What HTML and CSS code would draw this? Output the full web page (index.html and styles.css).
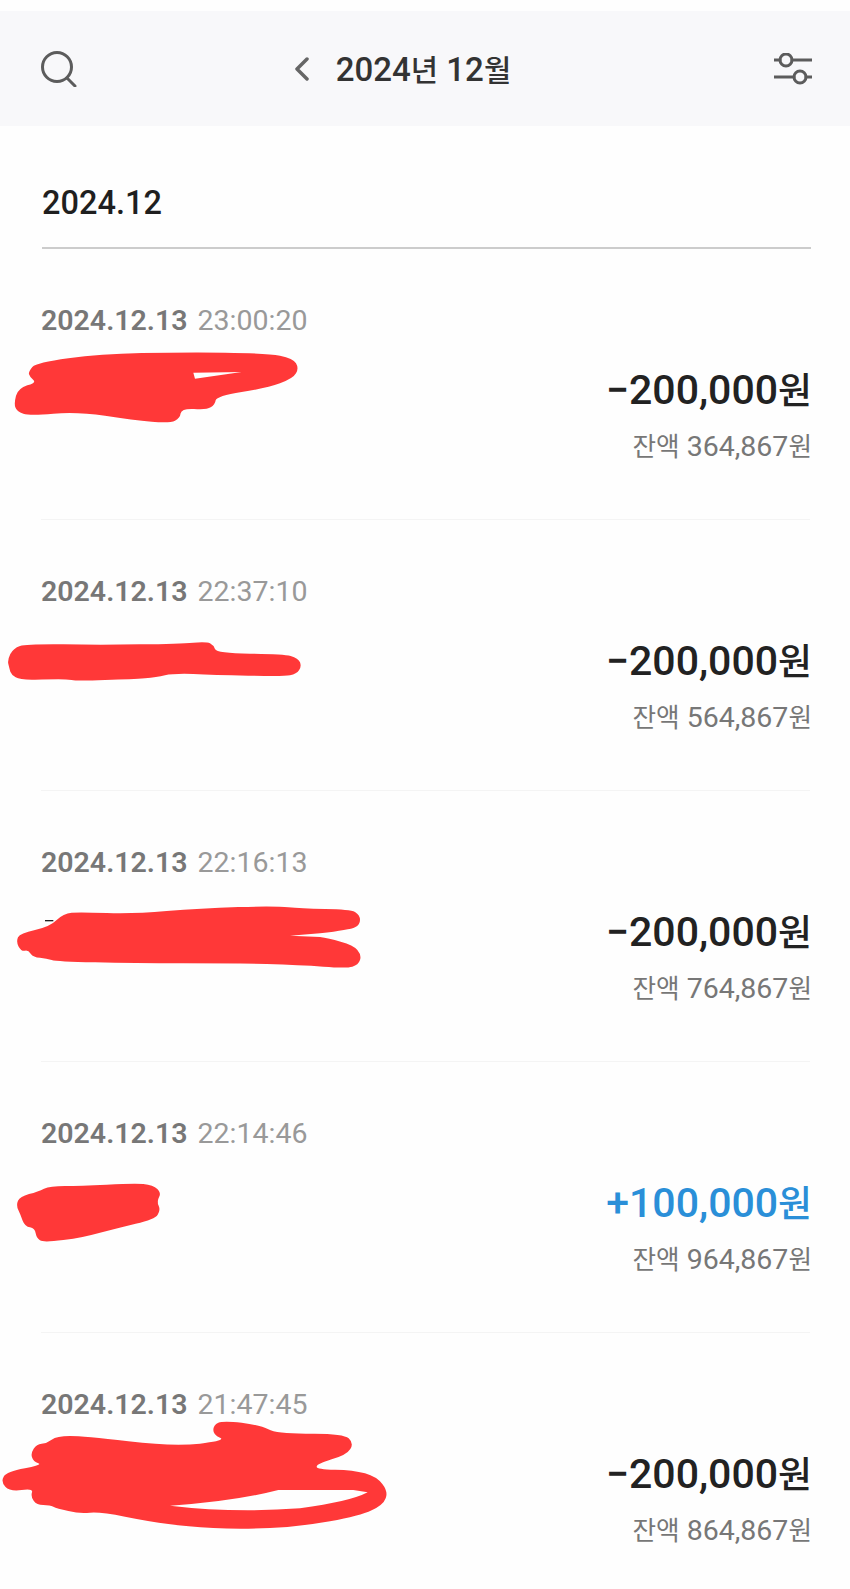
FILE: index.html
```html
<!DOCTYPE html>
<html lang="ko">

<head>
    <meta charset="UTF-8">
    <meta name="viewport" content="width=device-width, initial-scale=1.0">
    <title>2024년 12월</title>
    <link rel="stylesheet" href="styles.css">
</head>

<body>
    <header class="topbar">
        <svg class="icon" width="38" height="36" viewBox="0 0 38 36" fill="none">
            <circle cx="17" cy="16" r="14.5" />
            <path d="M27 27 L35 35" />
        </svg>
        <div class="month">
            <svg class="icon arrow" width="16" height="24" viewBox="0 0 16 24" fill="none">
                <path d="M13 2 L3 12 L13 22" />
            </svg>
            <span class="month-title">2024<span class="ko">년</span> 12<span class="ko">월</span></span>
            <!-- 다음 달 화살표: 이번 달이라 숨김 -->
            <svg class="icon arrow hidden" width="16" height="24" viewBox="0 0 16 24"></svg>
        </div>
        <svg class="icon" width="38" height="32" viewBox="0 0 38 32" fill="none">
            <circle cx="12" cy="7" r="6" />
            <path d="M0 7 H6 M18 7 H38" />
            <circle cx="26" cy="24" r="6" />
            <path d="M0 24 H20 M32 24 H38" />
        </svg>
    </header>

    <h2 class="section-title">2024.12</h2>

    <ul class="list">
        <li class="row">
            <p class="when"><b>2024.12.13</b> 23:00:20</p>
            <div class="money">
                <p class="amount">−200,000<span class="ko">원</span></p>
                <p class="balance"><span class="ko">잔액</span> 364,867<span class="ko">원</span></p>
            </div>
            <svg class="scribble s1" viewBox="0 180 1275 225">
                <path fill-rule="evenodd" d="M87 253 Q85 245 97 231 Q110 218 205 205 Q300 192 425 189 Q550 187 675 188 Q800 190 840 197 Q880 205 888 220 Q897 235 888 250 Q880 265 840 280 Q800 295 725 306 Q650 318 647 331 Q645 345 632 352 Q620 360 582 357 Q545 355 542 370 Q540 385 525 392 Q510 400 455 395 Q400 390 315 377 Q230 365 160 371 Q90 377 70 371 Q50 365 46 352 Q42 340 48 317 Q55 295 82 286 Q110 278 100 270 Q90 262 87 253 Z M580 248 L725 246 L585 266 Z" />
            </svg>
        </li>
        <li class="row">
            <p class="when"><b>2024.12.13</b> 22:37:10</p>
            <div class="money">
                <p class="amount">−200,000<span class="ko">원</span></p>
                <p class="balance"><span class="ko">잔액</span> 564,867<span class="ko">원</span></p>
            </div>
            <svg class="scribble s2" viewBox="0 60 1275 135">
                <path d="M25 132 Q22 120 31 102 Q40 85 60 78 Q80 72 190 73 Q300 75 420 73 Q540 72 580 68 Q620 65 630 70 Q640 75 645 87 Q650 100 750 101 Q850 102 872 108 Q895 115 900 127 Q905 140 897 151 Q890 162 870 166 Q850 170 745 167 Q640 165 580 162 Q520 160 495 166 Q470 172 435 175 Q400 178 315 180 Q230 183 215 180 Q200 178 175 178 Q150 178 105 179 Q60 180 47 172 Q35 165 31 155 Q28 145 25 132 Z" />
            </svg>
        </li>
        <li class="row">
            <p class="when"><b>2024.12.13</b> 22:16:13</p>
            <div class="money">
                <p class="amount">−200,000<span class="ko">원</span></p>
                <p class="balance"><span class="ko">잔액</span> 764,867<span class="ko">원</span></p>
            </div>
            <svg class="scribble s3" viewBox="0 840 1275 210">
                <path class="ink" d="M135 902 H160" />
                <path d="M56 980 Q48 965 54 952 Q60 940 105 930 Q150 920 170 900 Q190 880 215 878 Q240 876 320 879 Q400 882 500 873 Q600 865 715 861 Q830 858 865 862 Q900 866 975 867 Q1050 868 1065 876 Q1080 885 1080 900 Q1080 915 1065 922 Q1050 930 960 940 L870 947 L960 951 Q985 955 1022 965 Q1060 975 1072 990 Q1085 1005 1080 1020 Q1075 1035 1057 1040 Q1040 1045 970 1040 Q900 1035 800 1032 Q700 1030 550 1030 Q400 1030 285 1027 Q170 1025 155 1020 Q140 1015 120 1013 Q100 1012 92 1001 Q85 990 75 992 Q65 995 56 980 Z" />
            </svg>
        </li>
        <li class="row">
            <p class="when"><b>2024.12.13</b> 22:14:46</p>
            <div class="money">
                <p class="amount plus">+100,000<span class="ko">원</span></p>
                <p class="balance"><span class="ko">잔액</span> 964,867<span class="ko">원</span></p>
            </div>
            <svg class="scribble s4" viewBox="0 60 1275 195">
                <path d="M55 150 Q48 135 54 122 Q60 110 87 102 Q115 95 132 86 Q150 78 195 78 Q240 78 320 74 Q400 70 430 72 Q460 75 472 87 Q485 100 477 112 Q470 125 476 137 Q482 150 473 164 Q465 178 407 191 Q350 205 300 218 Q250 232 190 240 Q130 248 120 241 Q110 235 107 220 Q105 205 90 202 Q75 200 68 182 Q62 165 55 150 Z" />
            </svg>
        </li>
        <li class="row">
            <p class="when"><b>2024.12.13</b> 21:47:45</p>
            <div class="money">
                <p class="amount">−200,000<span class="ko">원</span></p>
                <p class="balance"><span class="ko">잔액</span> 864,867<span class="ko">원</span></p>
            </div>
            <svg class="scribble s5" viewBox="0 780 1275 330">
                <path fill-rule="evenodd" d="M96 892 Q92 880 101 866 Q110 852 125 851 Q140 850 155 839 Q170 828 210 828 Q250 828 385 844 Q520 860 600 851 Q680 842 660 833 Q640 825 640 810 Q640 795 655 788 Q670 782 725 788 Q780 795 805 808 Q830 822 930 821 Q1030 820 1046 835 Q1062 850 1051 867 Q1040 885 995 898 Q950 912 950 920 Q950 928 1005 929 Q1060 930 1095 940 Q1130 950 1147 972 Q1165 995 1157 1015 Q1150 1035 1115 1051 Q1080 1068 990 1084 Q900 1100 810 1104 Q720 1108 640 1104 Q560 1100 505 1092 Q450 1085 375 1070 Q300 1055 270 1058 Q240 1062 205 1053 Q170 1045 160 1040 Q150 1035 130 1035 Q110 1035 101 1022 Q92 1010 96 997 Q100 985 65 990 Q30 995 16 980 Q2 965 11 950 Q20 935 75 925 Q130 915 115 910 Q100 905 96 892 Z M510 1037 Q700 1025 835 990 L1060 990 L1103 997 Q1050 1025 900 1045 Q700 1060 510 1037 Z" />
            </svg>
        </li>
    </ul>
</body>

</html>
```

FILE: styles.css
```css
* {
    margin: 0;
    padding: 0;
    box-sizing: border-box;
}

body {
    background-color: #fefefe;
    font-family: Roboto, "Noto Sans CJK KR", sans-serif;
    overflow-x: hidden;
}

.topbar {
    height: 115px;
    margin-top: 11px;
    padding: 0 38px 0 40px;
    background-color: #f8f8fa;
    display: flex;
    align-items: center;
    justify-content: space-between;
}

.icon {
    display: block;
    stroke: #5c5c5c;
    stroke-width: 3;
    stroke-linecap: round;
    stroke-linejoin: round;
}

.month {
    margin-right: 5px;
    display: flex;
    align-items: center;
    gap: 26px;
}

.arrow {
    stroke: #666;
    stroke-width: 3.5;
}

.hidden {
    visibility: hidden;
}

.month-title {
    padding-top: 3px;
    font-size: 33px;
    font-weight: 500;
    line-height: 40px;
    color: #333;
}

/* 한글은 숫자보다 살짝 작게 */
.ko {
    font-size: 0.9em;
    line-height: 1;
}

.section-title {
    margin: 0 39px 0 42px;
    padding: 56px 0 23px;
    font-size: 32.5px;
    font-weight: 500;
    line-height: 42px;
    color: #1f1f1f;
    border-bottom: 2px solid #ccc;
}

.list {
    list-style: none;
}

.row {
    position: relative;
    margin: 0 40px 0 41px;
    padding: 52px 0 52px;
    border-bottom: 1px solid #f4f4f4;
}

.row:last-child {
    padding-bottom: 38px;
    border-bottom: none;
}

.when {
    font-size: 28.5px;
    line-height: 40px;
    color: #999;
}

.when b {
    margin-right: 3px;
    font-weight: 600;
    color: #777;
}

.money {
    margin-top: 25px;
    margin-right: -2px;
    text-align: right;
}

.amount {
    font-size: 41px;
    font-weight: 500;
    line-height: 48px;
    color: #222;
}

.amount.plus {
    color: #2a8fd8;
}

.balance {
    margin-top: 13px;
    font-size: 28.5px;
    line-height: 40px;
    color: #777;
}

/* 빨간 낙서: 이름을 가린 자국 */
.scribble {
    position: absolute;
    left: -41px;
    width: 425px;
    fill: #ff3838;
    overflow: visible;
}

.ink {
    stroke: #222;
    stroke-width: 4;
}

.s1 {
    top: 101px;
    height: 75px;
}

.s2 {
    top: 120px;
    height: 45px;
}

.s3 {
    top: 109px;
    height: 70px;
}

.s4 {
    top: 118px;
    height: 65px;
}

.s5 {
    top: 87px;
    height: 110px;
}
```
